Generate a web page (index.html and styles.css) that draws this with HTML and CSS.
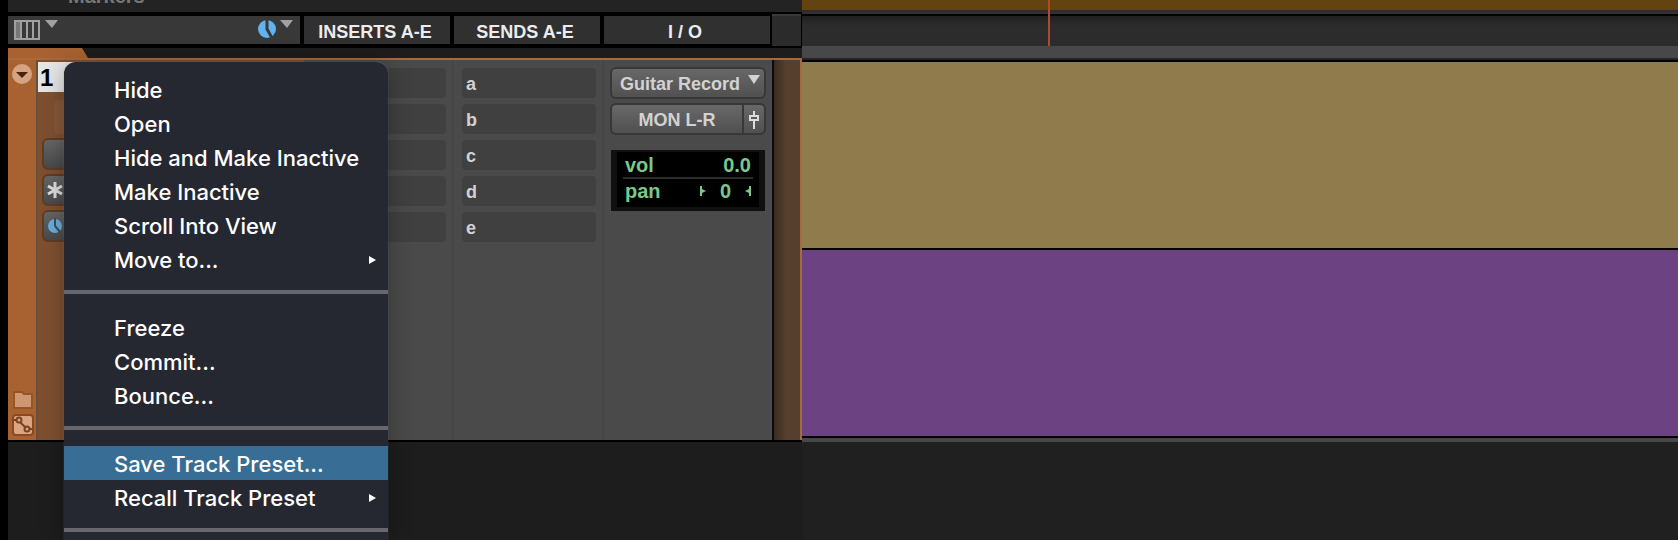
FILE: index.html
```html
<!DOCTYPE html>
<html lang="en">
  <head>
    <meta charset="UTF-8" />
    <meta name="viewport" content="width=device-width, initial-scale=1.0" />
    <title>Edit Window</title>
    <link rel="stylesheet" href="styles.css" />
  </head>

  <body>
    <main class="editor">
      <section class="tracks">
        <div class="ruler-name"><span>Markers</span></div>

        <div class="headers">
          <div class="header header-tools">
            <button class="tool" aria-label="Edit window view">
              <svg width="44" height="22" viewBox="0 0 44 22">
                <rect x="1" y="2" width="24" height="18" fill="none" stroke="#a0a0a0" stroke-width="2" />
                <rect x="2" y="3" width="4" height="16" fill="#777" />
                <path d="M7 2v18M13 2v18M19 2v18" stroke="#a0a0a0" stroke-width="2" />
                <path d="M31 1h13l-6 8z" fill="#a0a0a0" />
              </svg>
            </button>
            <button class="tool" aria-label="Timebase">
              <svg width="37" height="22" viewBox="0 0 37 22">
                <circle cx="10" cy="10" r="9" fill="#62b2ee" />
                <path d="M10 0v10l5 9" fill="none" stroke="#383838" stroke-width="3" />
                <path d="M23 1h13l-6 8z" fill="#a0a0a0" />
              </svg>
            </button>
          </div>
          <div class="header">INSERTS A-E</div>
          <div class="header">SENDS A-E</div>
          <div class="header header-io">I / O</div>
          <div class="header-end"></div>
        </div>

        <div class="tab-row"><div class="tab"></div></div>

        <article class="track">
          <div class="color-strip">
            <button class="round" aria-label="Track options">
              <svg width="20" height="20" viewBox="0 0 20 20">
                <circle cx="10" cy="10" r="10" fill="#d4a482" />
                <path d="M4 8h12l-6 6z" fill="#4a2208" />
              </svg>
            </button>
            <div class="strip-icons">
              <svg width="22" height="20" viewBox="0 0 22 20">
                <path d="M2 2h8l2 2h8v14H2z" fill="#cf9673" stroke="#94552b" stroke-width="2" />
              </svg>
              <svg width="22" height="22" viewBox="0 0 22 22">
                <rect x="1" y="1" width="20" height="20" rx="3" fill="#dba583" stroke="#8a491f" stroke-width="2" />
                <path d="M1 6h4M8 8l6 6M17 15h4" stroke="#7a421f" stroke-width="2" />
                <circle cx="7" cy="6" r="2.5" fill="none" stroke="#7a421f" stroke-width="2" />
                <circle cx="15" cy="15" r="2.5" fill="none" stroke="#7a421f" stroke-width="2" />
              </svg>
            </div>
          </div>

          <div class="name-col">
            <div class="track-name">1</div>
            <div class="track-buttons">
              <div class="name-slot"></div>
              <button class="mini" aria-label="Track view"></button>
              <button class="mini" aria-label="Elastic audio">
                <svg width="16" height="16" viewBox="0 0 16 16">
                  <path d="M8 0v16M1 4l14 8M1 12l14-8" stroke="#dedede" stroke-width="3" />
                </svg>
              </button>
              <button class="mini" aria-label="Track timebase">
                <svg width="16" height="16" viewBox="0 0 16 16">
                  <circle cx="8" cy="8" r="7" fill="#68aee3" />
                  <path d="M8 0v8l5 6" fill="none" stroke="#4a4a4a" stroke-width="2" />
                </svg>
              </button>
            </div>
          </div>

          <div class="slots">
            <button class="slot" aria-label="Insert a"></button>
            <button class="slot" aria-label="Insert b"></button>
            <button class="slot" aria-label="Insert c"></button>
            <button class="slot" aria-label="Insert d"></button>
            <button class="slot" aria-label="Insert e"></button>
          </div>

          <div class="slots">
            <button class="slot">a</button>
            <button class="slot">b</button>
            <button class="slot">c</button>
            <button class="slot">d</button>
            <button class="slot">e</button>
          </div>

          <div class="io">
            <div class="input-path">
              <select class="path" aria-label="Input path">
                <option>Guitar Record</option>
              </select>
              <svg class="arrow" width="12" height="9" viewBox="0 0 12 9">
                <path d="M0 0h12L6 9z" fill="#d2d2d2" />
              </svg>
            </div>
            <div class="output-path">
              <button class="path">MON L-R</button>
              <button class="path fader" aria-label="Output window">
                <svg width="12" height="18" viewBox="0 0 12 18">
                  <path d="M6 0v5M6 9v9" stroke="#dcdcdc" stroke-width="2" />
                  <rect x="2" y="5" width="8" height="4" fill="none" stroke="#dcdcdc" stroke-width="2" />
                </svg>
              </button>
            </div>
            <div class="readout">
              <div class="readout-row vol">
                <span>vol</span>
                <span>0.0</span>
              </div>
              <div class="readout-row">
                <span>pan</span>
                <span class="pan">
                  <svg width="6" height="10" viewBox="0 0 6 10"><path d="M0 0h2v3l4 2-4 2v3H0z" fill="#78c98b" /></svg>
                  0
                  <svg width="6" height="10" viewBox="0 0 6 10"><path d="M6 0H4v3L0 5l4 2v3h2z" fill="#78c98b" /></svg>
                </span>
              </div>
            </div>
          </div>

          <div class="track-edge"></div>
        </article>
      </section>

      <section class="timeline">
        <div class="markers"></div>
        <div class="ruler"></div>
        <div class="ruler-base"></div>
        <div class="lane lane-tan"></div>
        <div class="lane lane-purple"></div>
        <div class="lane-base"></div>
        <div class="playhead"></div>
      </section>
    </main>

    <div class="menu" role="menu">
      <button class="item" role="menuitem">Hide</button>
      <button class="item" role="menuitem">Open</button>
      <button class="item" role="menuitem">Hide and Make Inactive</button>
      <button class="item" role="menuitem">Make Inactive</button>
      <button class="item" role="menuitem">Scroll Into View</button>
      <button class="item" role="menuitem">
        Move to...
        <svg width="7" height="8" viewBox="0 0 7 8"><path d="M0 0l7 4-7 4z" fill="#fff" /></svg>
      </button>
      <hr />
      <button class="item" role="menuitem">Freeze</button>
      <button class="item" role="menuitem">Commit...</button>
      <button class="item" role="menuitem">Bounce...</button>
      <hr />
      <button class="item selected" role="menuitem">Save Track Preset...</button>
      <button class="item" role="menuitem">
        Recall Track Preset
        <svg width="7" height="8" viewBox="0 0 7 8"><path d="M0 0l7 4-7 4z" fill="#fff" /></svg>
      </button>
      <hr />
    </div>
  </body>
</html>
```
FILE: styles.css
```css
* {
  box-sizing: border-box;
}

body {
  margin: 0;
  background-color: #000;
  color: #d2d2d2;
  font-family: "Liberation Sans", Arial, sans-serif;
  font-size: 18px;
  font-weight: bold;
  overflow: hidden;
}

button,
select {
  margin: 0;
  padding: 0;
  border: none;
  background: none;
  color: inherit;
  font: inherit;
}

svg {
  display: block;
}

.editor {
  display: flex;
  min-height: 100vh;
  padding-left: 8px;
}

.tracks {
  display: flex;
  flex-direction: column;
  flex: none;
  background-color: #1d1d1d;
}

.ruler-name {
  display: flex;
  align-items: flex-end;
  height: 12px;
  padding: 0 60px 4px;
  background-color: #232323;
  color: #777;
  font-size: 20px;
  line-height: 24px;
  overflow: hidden;
}

/* column headers */
.headers {
  display: flex;
  gap: 4px;
  padding: 4px 0;
  background-color: #000;
}

.header {
  width: 146px;
  height: 28px;
  padding-right: 4px;
  background-color: #303030;
  color: #ececec;
  line-height: 32px;
  text-align: center;
}

.header-tools {
  display: flex;
  justify-content: space-between;
  width: 292px;
  padding: 3px 6px;
  background-color: #383838;
}

.header-io {
  width: 166px;
}

.header-end {
  flex: 1;
  margin: -2px 1px -2px -2px;
  border-top: 2px solid #383838;
  background-color: #2b2b2b;
}

.tab-row {
  height: 12px;
  border-bottom: 2px solid #a56a42;
}

.tab {
  width: 80px;
  height: 10px;
  background-color: #a86232;
  clip-path: polygon(0 0, 74px 0, 100% 100%, 0 100%);
}

/* track */
.track {
  display: flex;
  min-height: 382px;
  border-bottom: 2px solid #000;
  background-color: #4a4a4a;
}

.color-strip {
  display: flex;
  flex-direction: column;
  justify-content: space-between;
  width: 30px;
  padding: 4px;
  border-right: 2px solid #65503f;
  background-color: #a86232;
}

.strip-icons {
  display: flex;
  flex-direction: column;
  gap: 4px;
}

.name-col {
  width: 266px;
  padding-top: 2px;
  background-color: #7f5030;
}

.track-name {
  height: 30px;
  padding-left: 2px;
  background-color: #e6e6e6;
  color: #000;
  font-size: 24px;
  line-height: 32px;
}

.track-buttons {
  display: flex;
  flex-direction: column;
  gap: 4px;
  padding: 8px 4px;
}

.name-slot {
  height: 34px;
  margin-left: 12px;
  border-radius: 5px;
  background-color: #87583a;
}

.mini {
  display: flex;
  align-items: center;
  width: 60px;
  height: 32px;
  padding-left: 3px;
  border: 2px solid #603c25;
  border-radius: 6px;
  background: linear-gradient(#666, #4a4a4a);
}

.slots {
  display: flex;
  flex-direction: column;
  gap: 6px;
  width: 150px;
  padding: 8px 6px 8px 8px;
  border-right: 2px solid #464646;
}

.slot {
  height: 30px;
  padding-left: 4px;
  border-radius: 4px;
  background-color: #404040;
  line-height: 32px;
  text-align: left;
}

.io {
  display: flex;
  flex-direction: column;
  gap: 4px;
  width: 168px;
  padding: 7px 6px;
}

.input-path {
  position: relative;
  display: flex;
}

.path {
  flex: 1;
  height: 32px;
  padding-top: 2px;
  border: 2px solid #383838;
  border-radius: 6px;
  background: linear-gradient(#686868, #505050);
}

select.path {
  appearance: none;
  padding-left: 8px;
}

.arrow {
  position: absolute;
  top: 8px;
  right: 6px;
  pointer-events: none;
}

.output-path {
  display: flex;
}

.output-path .path:first-child {
  border-right: none;
  border-radius: 6px 0 0 6px;
}

.output-path .fader {
  display: flex;
  flex: none;
  justify-content: center;
  align-items: center;
  width: 24px;
  border-radius: 0 6px 6px 0;
}

.readout {
  margin: 11px 1px 0;
  padding: 0 6px 4px;
  border: 6px solid #101010;
  border-width: 2px 6px 4px;
  background-color: #000;
  color: #78c98b;
  font-size: 20px;
  line-height: 24px;
}

.readout-row {
  display: flex;
  justify-content: space-between;
  padding: 0 2px;
}

.vol {
  padding-top: 1px;
  border-bottom: 2px solid #2b2b2b;
}

.pan {
  display: flex;
  align-items: center;
  gap: 14px;
}

.track-edge {
  width: 30px;
  border-left: 2px solid #0c0a08;
  border-right: 2px solid #a56a42;
  background: linear-gradient(90deg, #3a2b20, #563f2d 12px);
}

/* timeline */
.timeline {
  position: relative;
  flex: 1;
  background-color: #202020;
}

.markers {
  height: 16px;
  border-bottom: 2px solid #000;
  background: linear-gradient(#63430f 10px, #2b2b2b 10px, #333 14px);
}

.ruler {
  height: 30px;
  background: linear-gradient(#202020, #2c2c2c 10px);
}

.ruler-base {
  height: 16px;
  border-bottom: 2px solid #000;
  background: linear-gradient(#484848 12px, #242424 12px);
}

.lane {
  height: 188px;
  border-bottom: 2px solid #000;
}

.lane-tan {
  background-color: #8f7b4c;
}

.lane-purple {
  background-color: #6c4283;
}

.lane-base {
  height: 4px;
  background-color: #484848;
}

.playhead {
  position: absolute;
  top: 0;
  left: 246px;
  width: 2px;
  height: 46px;
  background-color: #b04a2b;
}

/* track context menu */
.menu {
  position: absolute;
  top: 62px;
  left: 64px;
  width: 324px;
  height: calc(100vh - 62px);
  padding-top: 10px;
  border-radius: 12px 12px 0 0;
  background-color: #252731;
  box-shadow: 0 0 1px #85858c, 0 4px 24px rgba(0, 0, 0, 0.3);
  overflow: hidden;
}

.item {
  display: flex;
  align-items: center;
  justify-content: space-between;
  width: 100%;
  height: 34px;
  padding: 2px 12px 0 50px;
  color: #fff;
  font-family: Inter, sans-serif;
  font-size: 22px;
  font-weight: 500;
  text-align: left;
}

.selected {
  background-color: #386d95;
}

.menu hr {
  height: 4px;
  margin: 14px 0 16px;
  border: none;
  background-color: #67676d;
}
```
